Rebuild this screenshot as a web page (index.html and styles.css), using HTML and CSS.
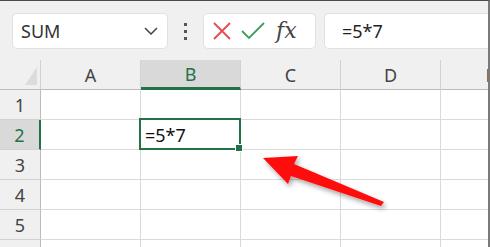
FILE: index.html
```html
<!DOCTYPE html>
<html lang="en">
  <head>
    <meta charset="UTF-8" />
    <title>Sheet</title>
    <link rel="stylesheet" href="styles.css">
  </head>
  <body>
    <div class="window">
      <div class="toolbar">
        <div class="namebox">
          <span>SUM</span>
          <svg class="chevron" width="14" height="8" viewBox="0 0 14 8"><path d="M1 1 L7 7 L13 1" fill="none" stroke="#444" stroke-width="1.5"/></svg>
        </div>
        <div class="dots"><i></i><i></i><i></i></div>
        <div class="actions">
          <svg width="20" height="20" viewBox="0 0 20 20"><path d="M2 2 L18 18 M18 2 L2 18" stroke="#e8484e" stroke-width="1.8" fill="none"/></svg>
          <svg width="24" height="20" viewBox="0 0 24 20"><path d="M1 10 L8 17 L23 2" stroke="#3f9e5a" stroke-width="1.8" fill="none"/></svg>
          <span class="fx">fx</span>
        </div>
        <div class="formula">=5*7</div>
      </div>

      <div class="sheet">
        <div class="corner"><span class="tri"></span></div>
        <div class="colhead">A</div>
        <div class="colhead sel">B</div>
        <div class="colhead">C</div>
        <div class="colhead">D</div>
        <div class="colhead">E</div>

        <div class="rowhead">1</div>
        <div class="cell"></div><div class="cell"></div><div class="cell"></div><div class="cell"></div><div class="cell"></div>

        <div class="rowhead sel">2</div>
        <div class="cell"></div><div class="cell active">=5*7</div><div class="cell"></div><div class="cell"></div><div class="cell"></div>

        <div class="rowhead">3</div>
        <div class="cell"></div><div class="cell"></div><div class="cell"></div><div class="cell"></div><div class="cell"></div>

        <div class="rowhead">4</div>
        <div class="cell"></div><div class="cell"></div><div class="cell"></div><div class="cell"></div><div class="cell"></div>

        <div class="rowhead">5</div>
        <div class="cell"></div><div class="cell"></div><div class="cell"></div><div class="cell"></div><div class="cell"></div>

        <div class="rowhead"></div>
        <div class="cell"></div><div class="cell"></div><div class="cell"></div><div class="cell"></div><div class="cell"></div>
      </div>

      <svg class="arrow" width="490" height="247" viewBox="0 0 490 247">
        <defs>
          <filter id="shadow" x="-20%" y="-20%" width="140%" height="140%">
            <feDropShadow dx="2" dy="3" stdDeviation="2.5" flood-color="#000" flood-opacity="0.35"/>
          </filter>
        </defs>
        <polygon points="263,158 298,156 294,164 384,202 381,206 291,176 288,184" fill="#ff0d0d" filter="url(#shadow)"/>
      </svg>
    </div>
  </body>
</html>
```

FILE: styles.css
```css
* {
  box-sizing: border-box;
  margin: 0;
  padding: 0;
}
body {
  width: 490px;
  height: 247px;
  overflow: hidden;
  background: white;
  font-family: "Segoe UI", "Noto Sans", sans-serif;
}
.window {
  position: relative;
  width: 490px;
  height: 247px;
  overflow: hidden;
  border-top: 1px solid #4a4a4a;
  border-right: 2px solid #7a7a7a;
}
.toolbar {
  height: 59px;
  background: #f0f0f0;
  display: flex;
  align-items: flex-start;
  padding: 12px 0 0 12px;
}
.namebox, .actions, .formula {
  height: 36px;
  background: white;
  border: 1px solid #e1e1e1;
  border-radius: 5px;
  display: flex;
  align-items: center;
}
.namebox {
  width: 156px;
  padding: 0 9px 0 8px;
  justify-content: space-between;
  font-size: 18px;
  color: #333;
}
.dots {
  width: 35px;
  display: flex;
  flex-direction: column;
  align-items: center;
  gap: 4px;
  padding-top: 10px;
}
.dots i {
  width: 3px;
  height: 3px;
  background: #555;
}
.actions {
  width: 113px;
  padding-left: 8px;
  gap: 9px;
}
.fx {
  font-family: "DejaVu Serif", "Liberation Serif", serif;
  font-style: italic;
  font-size: 22px;
  color: #444;
  margin-left: 2px;
  margin-top: -2px;
}
.formula {
  flex: 1;
  margin-left: 8px;
  border-right: none;
  border-radius: 5px 0 0 5px;
  padding-left: 17px;
  font-size: 18px;
  color: #222;
}
.sheet {
  display: grid;
  grid-template-columns: 41px 100px 100px 100px 100px 100px;
  grid-template-rows: 30px repeat(6, 30px);
  background: white;
}
.corner, .colhead, .rowhead {
  background: #f0f0f0;
  border-right: 1px solid #d2d2d2;
  border-bottom: 1px solid #bcbcbc;
  color: #444;
  font-size: 18px;
  display: flex;
  align-items: center;
  justify-content: center;
}
.corner {
  position: relative;
}
.tri {
  position: absolute;
  right: 3px;
  bottom: 4px;
  width: 0;
  height: 0;
  border-left: 12px solid transparent;
  border-bottom: 18px solid #dcdcdc;
}
.colhead.sel {
  background: #d9d9d9;
  color: #217346;
  border-bottom: 3px solid #217346;
}
.rowhead.sel {
  background: #d9d9d9;
  color: #217346;
  border-right: 2px solid #217346;
}
.rowhead {
  border-bottom: 1px solid #d2d2d2;
  border-right: 1px solid #bcbcbc;
}
.cell {
  border-right: 1px solid #dadada;
  border-bottom: 1px solid #dadada;
  font-size: 18px;
  color: #111;
  display: flex;
  align-items: center;
  padding-left: 4px;
}
.cell.active {
  position: relative;
}
.cell.active::before {
  content: "";
  position: absolute;
  left: -2px;
  top: -2px;
  right: -1px;
  bottom: -1px;
  border: 2px solid #217346;
}
.cell.active::after {
  content: "";
  position: absolute;
  right: -3px;
  bottom: -3px;
  width: 6px;
  height: 6px;
  background: #217346;
  border: 1px solid white;
}
.arrow {
  position: absolute;
  left: 0;
  top: -1px;
}
```
